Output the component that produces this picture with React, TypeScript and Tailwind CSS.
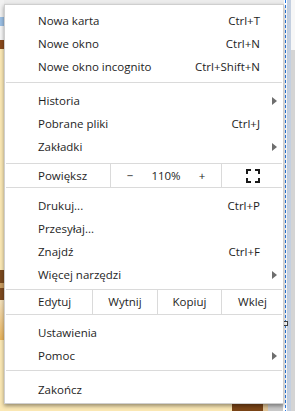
import type { ReactNode } from 'react';

const font = { fontFamily: '"Open Sans", "Liberation Sans", sans-serif' };

function Arrow() {
  return (
    <svg width="5" height="8" viewBox="0 0 5 8" className="block">
      <path d="M0 0L5 4L0 8Z" fill="#6e6e6e" />
    </svg>
  );
}

function Item({ label, shortcut, sub }: { label: string; shortcut?: string; sub?: boolean }) {
  return (
    <div className="flex h-[23px] items-center pl-[33px] pr-[6px]">
      <span className="flex-1">{label}</span>
      {shortcut ? <span>{shortcut}</span> : null}
      <span className="flex w-[17px] justify-end">{sub ? <Arrow /> : null}</span>
    </div>
  );
}

function Sep({ top, bottom }: { top: string; bottom: string }) {
  return <div className={`ml-px mr-px h-px bg-[#dadada] ${top} ${bottom}`} />;
}

function Cell({ children, className }: { children: ReactNode; className: string }) {
  return <div className={`flex h-full items-center ${className}`}>{children}</div>;
}

function FullscreenIcon() {
  return (
    <svg width="14" height="14" viewBox="0 0 14 14" className="block">
      <path
        d="M1 5V1H5M9 1H13V5M13 9V13H9M5 13H1V9"
        fill="none"
        stroke="#1a1a1a"
        strokeWidth="2"
      />
    </svg>
  );
}

export default function App() {
  return (
    <div className="relative flex h-[411px] w-[295px] overflow-hidden bg-[#fbe8b4]" style={font}>
      {/* page behind the menu */}
      <div className="flex w-[4px] flex-col">
        <div className="h-[17px] bg-[#f1f1f1]" />
        <div className="h-[9px] bg-[#9bbfe4]" />
        <div className="h-[14px] bg-[#f6f6f6]" />
        <div className="h-[9px] bg-[#8a4a1c]" />
        <div className="h-[221px] bg-[#fbe8b4]" />
        <div className="h-[13px] bg-[#7b4a1e]" />
        <div className="h-[5px] bg-[#c99c60]" />
        <div className="h-[12px] bg-[#7e4b1f]" />
        <div className="h-[40px] bg-gradient-to-b from-[#f4e2bc] to-[#e8b35a]" />
        <div className="flex-1 bg-[#fbe8b4]" />
      </div>
      <div className="flex flex-1 flex-col">
        <div className="h-[4px] bg-[#ececec]" />
        <div className="flex-1" />
        <div className="flex h-[8px]">
          <div className="w-[228px] bg-[#fbe8b4]" />
          <div className="w-[31px] bg-[#7b4517]" />
          <div className="w-[5px] bg-[#dfc497]" />
          <div className="w-[15px] bg-[#c9c9c9]" />
          <div className="flex-1 bg-white" />
        </div>
      </div>
      <div className="flex w-[11px]">
        <div className="w-[1px] bg-white" />
        <div className="w-[1px] bg-[repeating-linear-gradient(to_bottom,#2a7be4_0_3px,#ffffff_3px_5px)]" />
        <div className="w-[1px] bg-white" />
        <div className="w-[4px] bg-[#c3cfe0]" />
        <div className="flex w-[4px] flex-col">
          <div className="h-[50px] bg-[#f7f7f7]" />
          <div className="flex-1 bg-[#d4d4d4]" />
        </div>
      </div>

      {/* resize handle */}
      <div className="absolute left-[283px] top-[321px] h-[5px] w-[5px] border border-[#444] bg-white" />

      {/* chrome menu */}
      <div className="absolute left-[4px] top-[4px] w-[280px] border border-[#cfcfcf] bg-white pt-[4px] pb-[2px] text-[11.5px] text-[#1e1e1e] shadow-[0_2px_4px_rgba(0,0,0,0.4)]">
        <Item label="Nowa karta" shortcut="Ctrl+T" />
        <Item label="Nowe okno" shortcut="Ctrl+N" />
        <Item label="Nowe okno incognito" shortcut="Ctrl+Shift+N" />
        <Sep top="mt-[4px]" bottom="mb-[6px]" />
        <Item label="Historia" sub />
        <Item label="Pobrane pliki" shortcut="Ctrl+J" />
        <Item label="Zakładki" sub />
        <Sep top="mt-[5px]" bottom="mb-0" />
        <div className="flex h-[23px]">
          <Cell className="w-[105px] pl-[33px]">Powiększ</Cell>
          <div className="w-px bg-[#dadada]" />
          <Cell className="w-[38px] justify-center">−</Cell>
          <Cell className="w-[34px] justify-center">110%</Cell>
          <Cell className="w-[38px] justify-center">+</Cell>
          <div className="w-px bg-[#dadada]" />
          <Cell className="flex-1 justify-center">
            <FullscreenIcon />
          </Cell>
        </div>
        <Sep top="mt-0" bottom="mb-[6px]" />
        <Item label="Drukuj..." shortcut="Ctrl+P" />
        <Item label="Przesyłaj..." />
        <Item label="Znajdź" shortcut="Ctrl+F" />
        <Item label="Więcej narzędzi" sub />
        <Sep top="mt-[3px]" bottom="mb-0" />
        <div className="flex h-[24px]">
          <Cell className="w-[87px] pl-[33px]">Edytuj</Cell>
          <div className="w-px bg-[#dadada]" />
          <Cell className="w-[64px] justify-center">Wytnij</Cell>
          <div className="w-px bg-[#dadada]" />
          <Cell className="w-[63px] justify-center">Kopiuj</Cell>
          <div className="w-px bg-[#dadada]" />
          <Cell className="flex-1 justify-center">Wklej</Cell>
        </div>
        <Sep top="mt-0" bottom="mb-[6px]" />
        <Item label="Ustawienia" />
        <Item label="Pomoc" sub />
        <Sep top="mt-[3px]" bottom="mb-[7px]" />
        <Item label="Zakończ" />
      </div>
    </div>
  );
}
